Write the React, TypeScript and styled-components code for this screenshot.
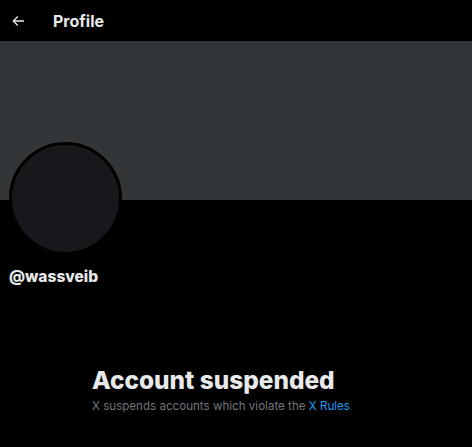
import React from "react";
import styled, { createGlobalStyle } from "styled-components";

const Global = createGlobalStyle`
  html, body { margin: 0; padding: 0; background: #000; }
  body { font-family: Inter, "Liberation Sans", Arial, sans-serif; color: #e7e9ea; }
`;

const Page = styled.div`
  width: 472px;
  height: 447px;
  background: #000;
  display: flex;
  flex-direction: column;
  overflow: hidden;
`;

const Header = styled.header`
  height: 41px;
  display: flex;
  align-items: center;
  padding-left: 9px;
  gap: 26px;
  flex-shrink: 0;
`;

const BackButton = styled.button`
  width: 18px;
  height: 18px;
  padding: 0;
  border: 0;
  background: transparent;
  color: #e7e9ea;
  display: flex;
  align-items: center;
  justify-content: center;
`;

const Title = styled.h1`
  margin: 0;
  font-size: 16px;
  font-weight: 700;
  color: #e7e9ea;
`;

const Banner = styled.div`
  height: 159px;
  background: #333639;
  flex-shrink: 0;
`;

const ProfileInfo = styled.div`
  display: flex;
  flex-direction: column;
  padding-left: 9px;
`;

const Avatar = styled.div`
  width: 107px;
  height: 107px;
  border-radius: 50%;
  background: #16181c;
  border: 3px solid #000;
  margin-top: -58px;
`;

const Handle = styled.div`
  margin-top: 12px;
  font-size: 15.5px;
  font-weight: 800;
  color: #e7e9ea;
`;

const Notice = styled.div`
  display: flex;
  flex-direction: column;
  padding-left: 92px;
  margin-top: 80px;
`;

const NoticeTitle = styled.h2`
  margin: 0;
  font-size: 24.4px;
  line-height: 28px;
  font-weight: 800;
  color: #e7e9ea;
`;

const NoticeText = styled.p`
  margin: 5px 0 0;
  font-size: 11.6px;
  color: #71767b;
`;

const RulesLink = styled.a`
  color: #1d9bf0;
  text-decoration: none;
`;

export default function App() {
  return (
    <>
      <Global />
      <Page>
        <Header>
          <BackButton aria-label="Back">
            <svg width="16" height="16" viewBox="0 0 24 24" fill="currentColor">
              <path d="M7.414 13l5.043 5.04-1.414 1.42L3.586 12l7.457-7.46 1.414 1.42L7.414 11H21v2H7.414z" />
            </svg>
          </BackButton>
          <Title>Profile</Title>
        </Header>
        <Banner />
        <ProfileInfo>
          <Avatar />
          <Handle>@wassveib</Handle>
        </ProfileInfo>
        <Notice>
          <NoticeTitle>Account suspended</NoticeTitle>
          <NoticeText>
            X suspends accounts which violate the <RulesLink href="#">X Rules</RulesLink>
          </NoticeText>
        </Notice>
      </Page>
    </>
  );
}
